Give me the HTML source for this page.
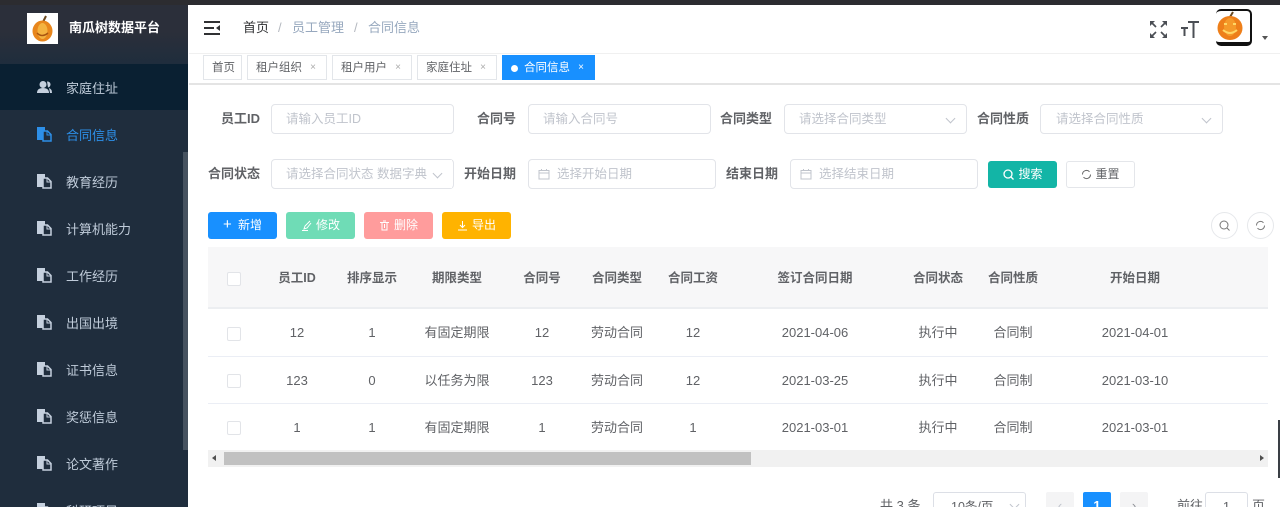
<!DOCTYPE html>
<html lang="zh-CN"><head><meta charset="utf-8"><title>合同信息</title>
<style>
*{box-sizing:border-box}
html,body{margin:0;padding:0;width:1280px;height:507px;overflow:hidden}
body{position:relative;background:#fff;font-family:"Liberation Sans","Noto Sans CJK SC",sans-serif;font-size:13px;color:#606266}
#root{position:absolute;left:0;top:0;width:1280px;height:507px;overflow:hidden;background:#fff}
.a{position:absolute;white-space:nowrap}
.c{position:absolute;white-space:nowrap;text-align:center;transform:translateX(-50%);line-height:16px}
.menu{position:absolute;left:66px;color:#bfcbd9;font-size:13px;line-height:16px;white-space:nowrap}
.mi{position:absolute;left:37px;width:15px;height:15px}
.lb{position:absolute;font-size:13px;font-weight:700;color:#606266;line-height:16px;text-align:right;white-space:nowrap}
.in{position:absolute;height:30px;border:1px solid #e2e4e9;border-radius:4px;background:#fff;color:#c0c4cc;font-size:12.5px;line-height:28px;padding-left:14px;white-space:nowrap;overflow:hidden}
.tag{position:absolute;top:55px;height:25px;border:1px solid #e3e6ea;background:#fff;color:#606266;font-size:11.5px;line-height:24px;padding-left:8px;white-space:nowrap}
.tag i{position:absolute;right:10px;top:0;font-style:normal;color:#aaa;font-size:10px}
.btn{position:absolute;top:212px;width:69px;height:27px;border-radius:3px;color:#fff;font-size:12px;line-height:27px;text-align:center;white-space:nowrap}
.th{font-weight:700;font-size:12.5px;color:#606266}
.td{font-size:13px;color:#606266}
.cb{position:absolute;left:227px;width:14px;height:14px;border:1px solid #e2e4e8;border-radius:2px;background:#fff}
.hr{position:absolute;left:208px;width:1060px;height:1px;background:#ebeef5}
.ar{position:absolute;width:7px;height:7px;border-right:1px solid #c0c4cc;border-bottom:1px solid #c0c4cc;transform:rotate(45deg)}
svg{display:block}
</style></head><body><div id="root">

<!-- sidebar -->
<div class="a" style="left:0;top:0;width:188px;height:507px;background:#1f2d3d"></div>
<div class="a" style="left:0;top:0;width:188px;height:64px;background:linear-gradient(#2b2f3a,#2b2f3a 50%,#1f2d3d)"></div>
<div class="a" style="left:0;top:0;width:1280px;height:5px;background:#2c2c30"></div>
<div class="a" style="left:27px;top:13px;width:31px;height:31px;background:#fff"></div>
<svg class="a" style="left:29px;top:15px" width="27" height="28" viewBox="0 0 27 28"><path d="M14 7L17 1" stroke="#6b4a22" stroke-width="2"/><ellipse cx="13.500" cy="16" rx="10" ry="10.500" fill="#e8861c"/><ellipse cx="13.500" cy="16" rx="5" ry="8" fill="#f4b340"/><path d="M8 18q5 5 11 0" stroke="#a85410" stroke-width="1.500" fill="none"/></svg>
<div class="a" style="left:69px;top:20px;color:#fff;font-weight:700;font-size:13px;line-height:16px">南瓜树数据平台</div>

<div class="a" style="left:0;top:64px;width:188px;height:46px;background:#0a2032"></div>
<svg class="mi" style="top:80px" viewBox="0 0 15 15"><circle cx="6" cy="4.500" r="3.500" fill="#c5d0de"/><path d="M0 13q0-5 6-5t6 5z" fill="#c5d0de"/><path d="M10 1.500a3 3 0 0 1 1 6M12 8q3 1 3 5h-2" fill="#c5d0de"/></svg>
<div class="menu" style="top:81px">家庭住址</div>
<div class="menu" style="top:128px;color:#2d8fe8">合同信息</div>
<div class="menu" style="top:175px">教育经历</div>
<div class="menu" style="top:222px">计算机能力</div>
<div class="menu" style="top:269px">工作经历</div>
<div class="menu" style="top:316px">出国出境</div>
<div class="menu" style="top:363px">证书信息</div>
<div class="menu" style="top:410px">奖惩信息</div>
<div class="menu" style="top:457px">论文著作</div>
<div class="menu" style="top:504px">科研项目</div>

<svg width="0" height="0" style="position:absolute"><defs><symbol id="doc" viewBox="0 0 15 15"><path d="M0 0h8v13H0z" fill="currentColor"/><path d="M6 4h4.500L14 7.500V14H6z" fill="#1f2d3d" stroke="currentColor" stroke-width="1.500"/><path d="M10 4v4h4" fill="none" stroke="currentColor"/></symbol></defs></svg>
<svg class="mi" style="top:127px;color:#2d8fe8"><use href="#doc"/></svg>
<svg class="mi" style="top:174px;color:#c5d0de"><use href="#doc"/></svg>
<svg class="mi" style="top:221px;color:#c5d0de"><use href="#doc"/></svg>
<svg class="mi" style="top:268px;color:#c5d0de"><use href="#doc"/></svg>
<svg class="mi" style="top:315px;color:#c5d0de"><use href="#doc"/></svg>
<svg class="mi" style="top:362px;color:#c5d0de"><use href="#doc"/></svg>
<svg class="mi" style="top:409px;color:#c5d0de"><use href="#doc"/></svg>
<svg class="mi" style="top:456px;color:#c5d0de"><use href="#doc"/></svg>
<svg class="mi" style="top:503px;color:#c5d0de"><use href="#doc"/></svg>
<div class="a" style="left:183px;top:152px;width:5px;height:298px;background:#46525f"></div>

<!-- top bar -->
<svg class="a" style="left:204px;top:21px" width="16" height="14" viewBox="0 0 16 14"><path d="M0 1h16M0 7h10M0 13h16" stroke="#303133" stroke-width="2"/><path d="M16 4v6l-4-3z" fill="#303133"/></svg>
<div class="a" style="left:243px;top:20px;line-height:16px;font-size:13px;color:#303133">首页</div>
<div class="a" style="left:278px;top:20px;line-height:16px;color:#b4b8bf">/</div>
<div class="a" style="left:292px;top:20px;line-height:16px;font-size:13px;color:#97a8be">员工管理</div>
<div class="a" style="left:354px;top:20px;line-height:16px;color:#b4b8bf">/</div>
<div class="a" style="left:368px;top:20px;line-height:16px;font-size:13px;color:#97a8be">合同信息</div>

<svg class="a" style="left:1150px;top:21px" width="17" height="17" viewBox="0 0 17 17"><path d="M1 1l5 5M16 1l-5 5M1 16l5-5M16 16l-5-5" stroke="#4b4f55" stroke-width="1.700"/><path d="M0 0h5L0 5zM17 0h-5l5 5zM0 17h5l-5-5zM17 17h-5l5-5z" fill="#4b4f55"/></svg>
<svg class="a" style="left:1181px;top:20px" width="18" height="19" viewBox="0 0 18 19"><path d="M7 2h11M12.500 2v16M0 8h7M3.500 8v8" stroke="#4b4f55" stroke-width="2" fill="none"/></svg>
<div class="a" style="left:1216px;top:9px;width:36px;height:37px;background:#fff;border-radius:5px;border-right:2px solid #111;border-top:2px solid #111;border-bottom:4px solid #111"></div>
<svg class="a" style="left:1216px;top:11px" width="28" height="30" viewBox="0 0 28 30"><path d="M14 6l3-5" stroke="#6b4a22" stroke-width="2"/><ellipse cx="14" cy="17" rx="12.500" ry="12" fill="#ee7f1a"/><ellipse cx="14" cy="16" rx="6" ry="9" fill="#f59a2a"/><path d="M7 19q7 6 14 0" stroke="#ffd766" stroke-width="2" fill="none"/><path d="M8 13h3M17 13h3" stroke="#ffd766" stroke-width="2"/></svg>
<div class="a" style="left:1262px;top:36px;width:0;height:0;border:3.500px solid transparent;border-top:4px solid #555"></div>

<!-- tags -->
<div class="a" style="left:189px;top:53px;width:1091px;height:1px;background:#f0f0f0"></div>
<div class="a" style="left:189px;top:83px;width:1091px;height:2px;background:#e4e4e4"></div>
<div class="tag" style="left:203px;width:39px">首页</div>
<div class="tag" style="left:247px;width:80px">租户组织<i>×</i></div>
<div class="tag" style="left:332px;width:80px">租户用户<i>×</i></div>
<div class="tag" style="left:417px;width:80px">家庭住址<i>×</i></div>
<div class="tag" style="left:502px;width:93px;background:#1890ff;border-color:#1890ff;color:#fff;padding-left:21px">合同信息<i style="color:#fff">×</i></div>
<div class="a" style="left:511px;top:65px;width:7px;height:7px;border-radius:50%;background:#fff"></div>

<!-- form row 1 -->
<div class="lb" style="left:207px;width:53px;top:111px">员工ID</div>
<div class="in" style="left:271px;top:104px;width:183px">请输入员工ID</div>
<div class="lb" style="left:464px;width:52px;top:111px">合同号</div>
<div class="in" style="left:528px;top:104px;width:183px">请输入合同号</div>
<div class="lb" style="left:719px;width:53px;top:111px">合同类型</div>
<div class="in" style="left:784px;top:104px;width:183px">请选择合同类型</div>
<div class="ar" style="left:947px;top:115px"></div>
<div class="lb" style="left:976px;width:53px;top:111px">合同性质</div>
<div class="in" style="left:1040px;top:104px;width:183px;padding-left:15px">请选择合同性质</div>
<div class="ar" style="left:1203px;top:115px"></div>

<!-- form row 2 -->
<div class="lb" style="left:208px;width:52px;top:166px">合同状态</div>
<div class="in" style="left:271px;top:159px;width:183px">请选择合同状态 数据字典</div>
<div class="a" style="left:430px;top:160px;width:22px;height:28px;background:#fff"></div>
<div class="ar" style="left:434px;top:170px"></div>
<div class="lb" style="left:464px;width:52px;top:166px">开始日期</div>
<div class="in" style="left:528px;top:159px;width:188px;padding-left:28px">选择开始日期</div>
<svg class="a" style="left:538px;top:168px" width="12" height="12" viewBox="0 0 12 12"><path d="M1 2.500h10v8.500H1zM1 5h10M3.500 1v2M8.500 1v2" stroke="#c0c4cc" fill="none"/></svg>
<div class="lb" style="left:725px;width:53px;top:166px">结束日期</div>
<div class="in" style="left:790px;top:159px;width:188px;padding-left:28px">选择结束日期</div>
<svg class="a" style="left:800px;top:168px" width="12" height="12" viewBox="0 0 12 12"><path d="M1 2.500h10v8.500H1zM1 5h10M3.500 1v2M8.500 1v2" stroke="#c0c4cc" fill="none"/></svg>
<div class="btn" style="left:988px;top:161px;background:#13b5a6;padding-left:16px">搜索</div>
<svg class="a" style="left:1003px;top:169px" width="11" height="11" viewBox="0 0 11 11"><circle cx="5" cy="5" r="4" stroke="#fff" stroke-width="1.300" fill="none"/><path d="M8 8l2.500 2.500" stroke="#fff" stroke-width="1.300"/></svg>
<div class="btn" style="left:1066px;top:161px;background:#fff;border:1px solid #e4e6ea;color:#606266;padding-left:14px;line-height:25px">重置</div>
<svg class="a" style="left:1081px;top:169px" width="11" height="11" viewBox="0 0 11 11"><path d="M1.500 5.500a4 4 0 0 1 7-2.700M9.500 5.500a4 4 0 0 1-7 2.700" stroke="#666" fill="none"/></svg>

<!-- action buttons -->
<div class="btn" style="left:208px;background:#1890ff;padding-left:15px">新增</div>
<div class="a" style="left:223px;top:218px;font-size:15px;line-height:14px;color:#fff">+</div>
<div class="btn" style="left:286px;background:#6fdcb6;padding-left:15px">修改</div>
<svg class="a" style="left:301px;top:220px" width="11" height="11" viewBox="0 0 11 11"><path d="M9 1L4 6 3 9l3-1 4-5M1 10.500h6" stroke="#fff" fill="none"/></svg>
<div class="btn" style="left:364px;background:#ff9c9c;padding-left:15px">删除</div>
<svg class="a" style="left:379px;top:220px" width="11" height="11" viewBox="0 0 11 11"><path d="M1 2.500h9M3 2.500v7.500h5V2.500M4 1h3M5.500 4v4" stroke="#fff" fill="none"/></svg>
<div class="btn" style="left:442px;background:#ffb300;padding-left:15px">导出</div>
<svg class="a" style="left:457px;top:220px" width="11" height="11" viewBox="0 0 11 11"><path d="M5.500 1v6M3 5l2.500 2.500L8 5M1 10h9" stroke="#fff" fill="none"/></svg>

<!-- round buttons -->
<div class="a" style="left:1211px;top:212px;width:27px;height:27px;border:1px solid #e6e8eb;border-radius:50%"></div>
<svg class="a" style="left:1219px;top:220px" width="11" height="11" viewBox="0 0 11 11"><circle cx="5" cy="5" r="4" stroke="#777" fill="none"/><path d="M8 8l2.500 2.500" stroke="#777"/></svg>
<div class="a" style="left:1247px;top:212px;width:27px;height:27px;border:1px solid #e6e8eb;border-radius:50%"></div>
<svg class="a" style="left:1255px;top:220px" width="11" height="11" viewBox="0 0 11 11"><path d="M1.500 5.500a4 4 0 0 1 7-2.700M9.500 5.500a4 4 0 0 1-7 2.700" stroke="#777" fill="none"/></svg>

<!-- table -->
<div class="a" style="left:208px;top:247px;width:1060px;height:62px;background:#f7f7f8;border-bottom:2px solid #eceef1"></div>
<div class="cb" style="top:272px"></div>
<div class="c th" style="left:297px;top:270px">员工ID</div>
<div class="c th" style="left:372px;top:270px">排序显示</div>
<div class="c th" style="left:457px;top:270px">期限类型</div>
<div class="c th" style="left:542px;top:270px">合同号</div>
<div class="c th" style="left:617px;top:270px">合同类型</div>
<div class="c th" style="left:693px;top:270px">合同工资</div>
<div class="c th" style="left:815px;top:270px">签订合同日期</div>
<div class="c th" style="left:938px;top:270px">合同状态</div>
<div class="c th" style="left:1013px;top:270px">合同性质</div>
<div class="c th" style="left:1135px;top:270px">开始日期</div>

<div class="cb" style="top:327px"></div>
<div class="c td" style="left:297px;top:325px">12</div>
<div class="c td" style="left:372px;top:325px">1</div>
<div class="c td" style="left:457px;top:325px">有固定期限</div>
<div class="c td" style="left:542px;top:325px">12</div>
<div class="c td" style="left:617px;top:325px">劳动合同</div>
<div class="c td" style="left:693px;top:325px">12</div>
<div class="c td" style="left:815px;top:325px">2021-04-06</div>
<div class="c td" style="left:938px;top:325px">执行中</div>
<div class="c td" style="left:1013px;top:325px">合同制</div>
<div class="c td" style="left:1135px;top:325px">2021-04-01</div>
<div class="hr" style="top:356px"></div>

<div class="cb" style="top:374px"></div>
<div class="c td" style="left:297px;top:373px">123</div>
<div class="c td" style="left:372px;top:373px">0</div>
<div class="c td" style="left:457px;top:373px">以任务为限</div>
<div class="c td" style="left:542px;top:373px">123</div>
<div class="c td" style="left:617px;top:373px">劳动合同</div>
<div class="c td" style="left:693px;top:373px">12</div>
<div class="c td" style="left:815px;top:373px">2021-03-25</div>
<div class="c td" style="left:938px;top:373px">执行中</div>
<div class="c td" style="left:1013px;top:373px">合同制</div>
<div class="c td" style="left:1135px;top:373px">2021-03-10</div>
<div class="hr" style="top:403px"></div>

<div class="cb" style="top:421px"></div>
<div class="c td" style="left:297px;top:420px">1</div>
<div class="c td" style="left:372px;top:420px">1</div>
<div class="c td" style="left:457px;top:420px">有固定期限</div>
<div class="c td" style="left:542px;top:420px">1</div>
<div class="c td" style="left:617px;top:420px">劳动合同</div>
<div class="c td" style="left:693px;top:420px">1</div>
<div class="c td" style="left:815px;top:420px">2021-03-01</div>
<div class="c td" style="left:938px;top:420px">执行中</div>
<div class="c td" style="left:1013px;top:420px">合同制</div>
<div class="c td" style="left:1135px;top:420px">2021-03-01</div>

<!-- scrollbar -->
<div class="a" style="left:208px;top:450px;width:1060px;height:17px;background:#f1f1f1"></div>
<div class="a" style="left:224px;top:452px;width:527px;height:13px;background:#c1c1c1"></div>
<div class="a" style="left:212px;top:455px;width:0;height:0;border:3.500px solid transparent;border-right:4px solid #505050;border-left:0"></div>
<div class="a" style="left:1260px;top:455px;width:0;height:0;border:3.500px solid transparent;border-left:4px solid #505050;border-right:0"></div>
<div class="a" style="left:1278px;top:420px;width:2px;height:58px;background:#3a3f45"></div>

<!-- pagination -->
<div class="a" style="left:880px;top:498px;font-size:13px;line-height:16px">共 3 条</div>
<div class="a" style="left:933px;top:492px;width:93px;height:30px;border:1px solid #dcdfe6;border-radius:3px;padding-left:17px;line-height:28px;font-size:12.500px">10条/页</div>
<div class="ar" style="left:1011px;top:501px"></div>
<div class="a" style="left:1046px;top:492px;width:28px;height:28px;background:#f4f4f5;border-radius:2px;text-align:center;line-height:28px;color:#c0c4cc">‹</div>
<div class="a" style="left:1083px;top:492px;width:28px;height:28px;background:#1890ff;border-radius:2px;text-align:center;line-height:28px;color:#fff;font-weight:700">1</div>
<div class="a" style="left:1120px;top:492px;width:28px;height:28px;background:#f4f4f5;border-radius:2px;text-align:center;line-height:28px;color:#909399">›</div>
<div class="a" style="left:1177px;top:498px;font-size:13px;line-height:16px">前往</div>
<div class="a" style="left:1205px;top:492px;width:43px;height:30px;border:1px solid #dcdfe6;border-radius:3px;text-align:center;line-height:28px">1</div>
<div class="a" style="left:1252px;top:498px;font-size:13px;line-height:16px">页</div>

</div></body></html>
